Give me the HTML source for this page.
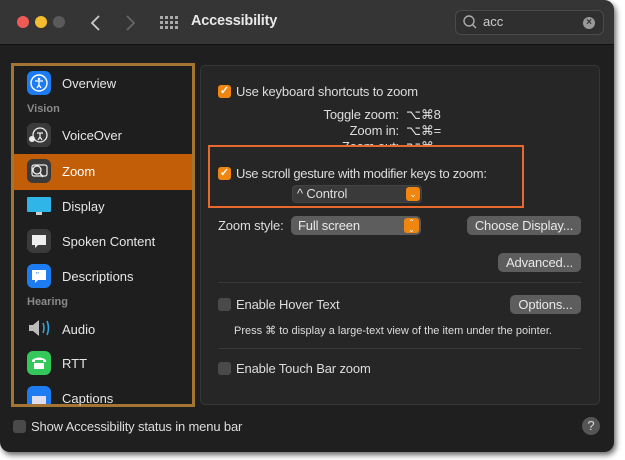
<!DOCTYPE html>
<html><head><style>
*{margin:0;padding:0;box-sizing:border-box}
body{width:625px;height:460px;background:#fff;position:relative;overflow:hidden;font-family:"Liberation Sans",sans-serif;color:#ddd}
.a{position:absolute}
#win{left:0;top:0;width:614px;height:452px;background:#1f1f1f;border-radius:0 10px 10px 10px;box-shadow:2px 3px 6px rgba(0,0,0,.6);overflow:hidden}
#tb{left:0;top:0;width:614px;height:45px;background:#353535;border-bottom:1px solid #111}
.dot{width:12px;height:12px;border-radius:50%;top:16px}
.t13{font-size:13px;white-space:nowrap;letter-spacing:-0.15px}
.cb{width:13px;height:13px;border-radius:3px;background:#f0850f;color:#fff;font-size:11px;line-height:13px;text-align:center;font-weight:bold}
.ucb{width:13px;height:13px;border-radius:3px;background:#4a4a4a}
.btn{background:#5d5d5d;border-radius:5px;height:19px;font-size:13px;line-height:19px;text-align:center;color:#e8e8e8;letter-spacing:-0.15px}
.ic{width:24px;height:24px;border-radius:6px;left:16px}
.it{left:62px;font-size:13px;color:#e6e6e6}
.hd{left:27px;font-size:11px;color:#8a8a8a;font-weight:bold}
</style></head><body>
<div id="win" class="a">
 <div id="tb" class="a">
  <div class="a dot" style="left:17px;background:#ee5a55"></div>
  <div class="a dot" style="left:35px;background:#f5bd2f"></div>
  <div class="a dot" style="left:53px;background:#5a5a5a"></div>
  <svg class="a" style="left:90px;top:14px" width="12" height="18"><path d="M9 2 L2 9 L9 16" stroke="#ccc" stroke-width="1.8" fill="none"/></svg>
  <svg class="a" style="left:124px;top:14px" width="12" height="18"><path d="M3 2 L10 9 L3 16" stroke="#666" stroke-width="1.8" fill="none"/></svg>
  <svg class="a" style="left:160px;top:16px" width="18" height="14" fill="#aaa">
   <rect x="0" y="0" width="3" height="3"/><rect x="5" y="0" width="3" height="3"/><rect x="10" y="0" width="3" height="3"/><rect x="15" y="0" width="3" height="3"/>
   <rect x="0" y="5" width="3" height="3"/><rect x="5" y="5" width="3" height="3"/><rect x="10" y="5" width="3" height="3"/><rect x="15" y="5" width="3" height="3"/>
   <rect x="0" y="10" width="3" height="3"/><rect x="5" y="10" width="3" height="3"/><rect x="10" y="10" width="3" height="3"/><rect x="15" y="10" width="3" height="3"/></svg>
  <div class="a" style="left:191px;top:13px;font-size:14.5px;font-weight:bold;color:#e8e8e8;letter-spacing:-0.2px">Accessibility</div>
  <div class="a" style="left:455px;top:10px;width:149px;height:25px;border:1px solid #4a4a4a;border-radius:6px;background:#2f2f2f"></div>
  <svg class="a" style="left:462px;top:14px" width="16" height="16"><circle cx="7" cy="7" r="5" stroke="#aaa" stroke-width="1.4" fill="none"/><path d="M10.5 10.5 L14 14" stroke="#aaa" stroke-width="1.5"/></svg>
  <div class="a" style="left:483px;top:14px;font-size:13px;color:#ccc">acc</div>
  <div class="a" style="left:583px;top:17px;width:12px;height:12px;border-radius:50%;background:#999;color:#333;font-size:10px;line-height:12px;text-align:center;font-weight:bold">×</div>
 </div>
 <div class="a" style="left:11px;top:63px;width:184px;height:344px;border:3px solid #a47433;background:#1e1e1e;overflow:hidden">
  <div class="a" style="left:0;top:88px;width:178px;height:36px;background:#c25e08"></div>
 </div>
 <div class="a ic" style="left:27px;top:71px;background:#1e7cf2"><svg width="24" height="24"><circle cx="12" cy="12" r="8" stroke="#fff" stroke-width="1.4" fill="none"/><circle cx="12" cy="8" r="1.3" fill="#fff"/><path d="M8 10 H16 M12 10 V14 L10 17 M12 14 L14 17" stroke="#fff" stroke-width="1.3" fill="none"/></svg></div>
 <div class="a it" style="top:76px">Overview</div>
 <div class="a hd" style="top:103px">Vision</div>
 <div class="a ic" style="left:27px;top:123px;background:#3a3a3a"><svg width="24" height="24"><circle cx="13" cy="12" r="7" stroke="#eee" stroke-width="1.3" fill="none"/><path d="M10 10 H16 M13 10 V14 L11 17 M13 14 L15 17" stroke="#eee" stroke-width="1.2" fill="none"/><circle cx="5" cy="16" r="3" fill="#eee"/></svg></div>
 <div class="a it" style="top:128px">VoiceOver</div>
 <div class="a ic" style="left:27px;top:159px;background:#3a3a3a"><svg width="24" height="24"><rect x="5" y="6" width="15" height="11" rx="2" stroke="#eee" stroke-width="1.2" fill="none"/><circle cx="10" cy="11" r="4" stroke="#eee" stroke-width="1.3" fill="#3a3a3a"/><path d="M13 14 L16 18" stroke="#eee" stroke-width="1.5"/></svg></div>
 <div class="a it" style="top:164px;color:#fff">Zoom</div>
 <div class="a" style="left:27px;top:197px;width:24px;height:15px;background:#2fb5e8;border-radius:1px"></div>
 <div class="a" style="left:36px;top:212px;width:6px;height:3px;background:#ccc"></div>
 <div class="a it" style="top:199px">Display</div>
 <div class="a ic" style="left:27px;top:229px;background:#3a3a3a"><svg width="24" height="24"><path d="M5 6 H19 V16 H11 L8 19 V16 H5 Z" fill="#eee"/></svg></div>
 <div class="a it" style="top:234px">Spoken Content</div>
 <div class="a ic" style="left:27px;top:264px;background:#1e7cf2"><svg width="24" height="24"><path d="M5 6 H19 V16 H11 L8 19 V16 H5 Z" fill="#fff"/><text x="9" y="14" font-size="8" fill="#1e7cf2" font-family="Liberation Sans">"</text></svg></div>
 <div class="a it" style="top:269px">Descriptions</div>
 <div class="a hd" style="top:296px">Hearing</div>
 <svg class="a" style="left:27px;top:316px" width="26" height="24"><path d="M2 9 H6 L12 4 V20 L6 15 H2 Z" fill="#bbb"/><path d="M16 7 Q18 12 16 17 M20 5 Q23 12 20 19" stroke="#3aa0d8" stroke-width="1.6" fill="none"/></svg>
 <div class="a it" style="top:322px">Audio</div>
 <div class="a ic" style="left:27px;top:351px;background:#34c759"><svg width="24" height="24"><path d="M5 9 Q12 4 19 9 V11 H16 V9 H8 V11 H5 Z M7 12 H17 V18 H7 Z" fill="#fff"/></svg></div>
 <div class="a it" style="top:356px">RTT</div>
 <div class="a ic" style="left:27px;top:386px;height:18px;border-radius:6px 6px 0 0;background:#1e7cf2"></div>
 <div class="a" style="left:32px;top:396px;width:14px;height:8px;background:#dde"></div>
 <div class="a it" style="top:391px">Captions</div>
 <div class="a" style="left:200px;top:65px;width:400px;height:340px;background:#262626;border:1px solid #363636;border-radius:5px"></div>
 <div class="a cb" style="left:218px;top:85px">✓</div>
 <div class="a t13" style="left:236px;top:84px">Use keyboard shortcuts to zoom</div>
 <div class="a t13" style="left:300px;top:107px;width:99px;text-align:right">Toggle zoom:</div><div class="a t13" style="left:406px;top:107px">⌥⌘8</div>
 <div class="a t13" style="left:300px;top:123px;width:99px;text-align:right">Zoom in:</div><div class="a t13" style="left:406px;top:123px">⌥⌘=</div>
 <div class="a" style="left:300px;top:139px;width:140px;height:8px;overflow:hidden"><div class="t13" style="position:absolute;left:0;top:0;width:99px;text-align:right">Zoom out:</div><div class="t13" style="position:absolute;left:106px;top:0">⌥⌘-</div></div>
 <div class="a" style="left:208px;top:145px;width:316px;height:63px;border:2px solid #e8692d"></div>
 <div class="a cb" style="left:218px;top:167px">✓</div>
 <div class="a t13" style="left:236px;top:166px;letter-spacing:-0.3px">Use scroll gesture with modifier keys to zoom:</div>
 <div class="a" style="left:292px;top:185px;width:130px;height:18px;background:#3a3a3a;border-radius:4px;border:1px solid #444"></div>
 <div class="a t13" style="left:297px;top:186px">^ Control</div>
 <div class="a" style="left:406px;top:187px;width:14px;height:14px;background:#f0850f;border-radius:3px;color:#fff;font-size:9px;line-height:14px;text-align:center">⌄</div>
 <div class="a t13" style="left:218px;top:218px">Zoom style:</div>
 <div class="a btn" style="left:291px;top:216px;width:130px;text-align:left;padding-left:7px">Full screen</div>
 <div class="a" style="left:404px;top:218px;width:15px;height:15px;background:#f0850f;border-radius:3px;color:#fff;font-size:8px;line-height:7px;text-align:center;padding-top:1px">⌃<br>⌄</div>
 <div class="a btn" style="left:467px;top:216px;width:114px">Choose Display...</div>
 <div class="a btn" style="left:498px;top:253px;width:83px">Advanced...</div>
 <div class="a" style="left:218px;top:282px;width:364px;height:1px;background:#3a3a3a"></div>
 <div class="a ucb" style="left:218px;top:298px"></div>
 <div class="a t13" style="left:236px;top:297px">Enable Hover Text</div>
 <div class="a btn" style="left:510px;top:295px;width:71px">Options...</div>
 <div class="a" style="left:234px;top:324px;font-size:11px;color:#ddd;white-space:nowrap">Press ⌘ to display a large-text view of the item under the pointer.</div>
 <div class="a" style="left:218px;top:348px;width:364px;height:1px;background:#3a3a3a"></div>
 <div class="a ucb" style="left:218px;top:362px"></div>
 <div class="a t13" style="left:236px;top:361px">Enable Touch Bar zoom</div>
 <div class="a ucb" style="left:13px;top:420px"></div>
 <div class="a t13" style="left:31px;top:419px">Show Accessibility status in menu bar</div>
 <div class="a" style="left:582px;top:417px;width:18px;height:18px;border-radius:50%;background:#555;color:#ddd;font-size:13px;line-height:18px;text-align:center">?</div>
</div>
</body></html>
